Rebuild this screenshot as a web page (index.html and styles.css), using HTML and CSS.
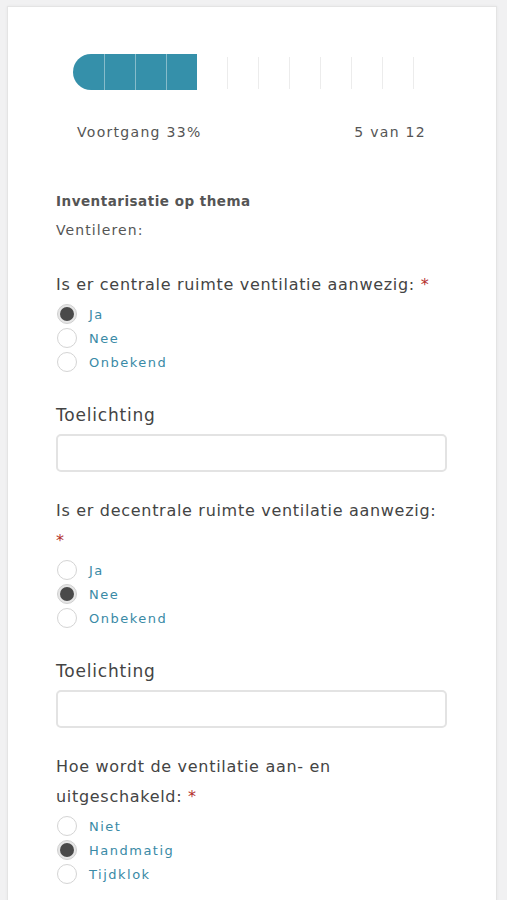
FILE: index.html
```html
<!DOCTYPE html>
<html lang="nl">
<head>
<meta charset="utf-8">
<title>Inventarisatie</title>
<link rel="stylesheet" href="styles.css">
</head>
<body>
<main class="card">
  <div class="progress">
    <div class="seg filled first"></div>
    <div class="seg filled"></div>
    <div class="seg filled"></div>
    <div class="seg filled"></div>
    <div class="seg empty"></div>
    <div class="seg empty"></div>
    <div class="seg empty"></div>
    <div class="seg empty"></div>
    <div class="seg empty"></div>
    <div class="seg empty"></div>
    <div class="seg empty"></div>
    <div class="seg last"></div>
  </div>
  <div class="progress-labels">
    <span>Voortgang 33%</span>
    <span>5 van 12</span>
  </div>

  <h2 class="section-title">Inventarisatie op thema</h2>
  <p class="section-sub">Ventileren:</p>

  <p class="question first-q">Is er centrale ruimte ventilatie aanwezig: <span class="req">*</span></p>
  <div class="options">
    <label class="opt"><span class="radio checked"></span>Ja</label>
    <label class="opt"><span class="radio"></span>Nee</label>
    <label class="opt"><span class="radio"></span>Onbekend</label>
  </div>
  <p class="field-label">Toelichting</p>
  <div class="input"></div>

  <p class="question">Is er decentrale ruimte ventilatie aanwezig: <span class="req">*</span></p>
  <div class="options">
    <label class="opt"><span class="radio"></span>Ja</label>
    <label class="opt"><span class="radio checked"></span>Nee</label>
    <label class="opt"><span class="radio"></span>Onbekend</label>
  </div>
  <p class="field-label">Toelichting</p>
  <div class="input"></div>

  <p class="question">Hoe wordt de ventilatie aan- en <span class="nowrap">uitgeschakeld: <span class="req">*</span></span></p>
  <div class="options">
    <label class="opt"><span class="radio"></span>Niet</label>
    <label class="opt"><span class="radio checked"></span>Handmatig</label>
    <label class="opt"><span class="radio"></span>Tijdklok</label>
  </div>
</main>
</body>
</html>
```

FILE: styles.css
```css
html, body {
  margin: 0;
  padding: 0;
  background: #f1f1f2;
  height: 100%;
  overflow: hidden;
}
body {
  font-family: "DejaVu Sans", "Verdana", sans-serif;
  color: #444;
}
.card {
  margin: 6px 10px 0 7px;
  background: #fff;
  border: 1px solid #e4e4e4;
  box-shadow: 0 0 3px rgba(0,0,0,0.05);
  padding: 47px 0 0 48px;
  min-height: 900px;
  box-sizing: border-box;
  display: flex;
  flex-direction: column;
  align-items: flex-start;
}
.progress {
  margin-left: 17px;
  display: grid;
  grid-template-columns: repeat(12, 31px);
  height: 36px;
}
.seg.filled {
  background: #3590aa;
  border-left: 1px solid #86bccb;
}
.seg.filled.first {
  border-left: none;
  border-radius: 18px 0 0 18px;
}
.seg.empty {
  border-right: 1px solid #ececec;
  margin: 3px 0 1px;
}
.progress-labels {
  margin-left: 17px;
  width: 374px;
  box-sizing: border-box;
  padding: 0 21px 0 4px;
  margin-top: 32px;
  display: flex;
  justify-content: space-between;
  font-size: 14px;
  line-height: 20px;
  letter-spacing: 1.3px;
  color: #555;
}
.section-title {
  margin: 45px 0 0;
  font-size: 13.5px;
  font-weight: 700;
  line-height: 29px;
  letter-spacing: 0.5px;
  color: #555;
}
.section-sub {
  margin: 0;
  font-size: 14px;
  line-height: 29px;
  letter-spacing: 1.1px;
  color: #555;
}
.question {
  margin: 24px 0 0;
  width: 391px;
  font-size: 16px;
  line-height: 30px;
  letter-spacing: 0.7px;
  color: #444;
}
.question.first-q {
  margin-top: 25px;
}
.nowrap {
  white-space: nowrap;
}
.req {
  color: #b4312e;
  letter-spacing: 0;
}
.options {
  margin-top: 2px;
  display: flex;
  flex-direction: column;
}
.opt {
  display: flex;
  align-items: center;
  gap: 12px;
  height: 24px;
  font-size: 13px;
  letter-spacing: 1.5px;
  color: #3a8aa6;
  margin-left: 1px;
}
.radio {
  width: 18px;
  height: 18px;
  border: 1px solid #d4d4d4;
  border-radius: 50%;
  background: #fff;
  box-sizing: content-box;
  position: relative;
}
.radio.checked {
  border-color: #d0d0d0;
  background: #e6e6e6;
}
.radio.checked::after {
  content: "";
  position: absolute;
  left: 2px;
  top: 2px;
  width: 14px;
  height: 14px;
  border-radius: 50%;
  background: #4a4a4a;
}
.field-label {
  margin: 29px 0 0;
  font-size: 17px;
  line-height: 24px;
  letter-spacing: 0.8px;
  color: #444;
}
.input {
  margin-top: 7px;
  width: 391px;
  height: 38px;
  box-sizing: border-box;
  border: 2px solid #e3e3e3;
  border-radius: 5px;
  background: #fff;
}
```
